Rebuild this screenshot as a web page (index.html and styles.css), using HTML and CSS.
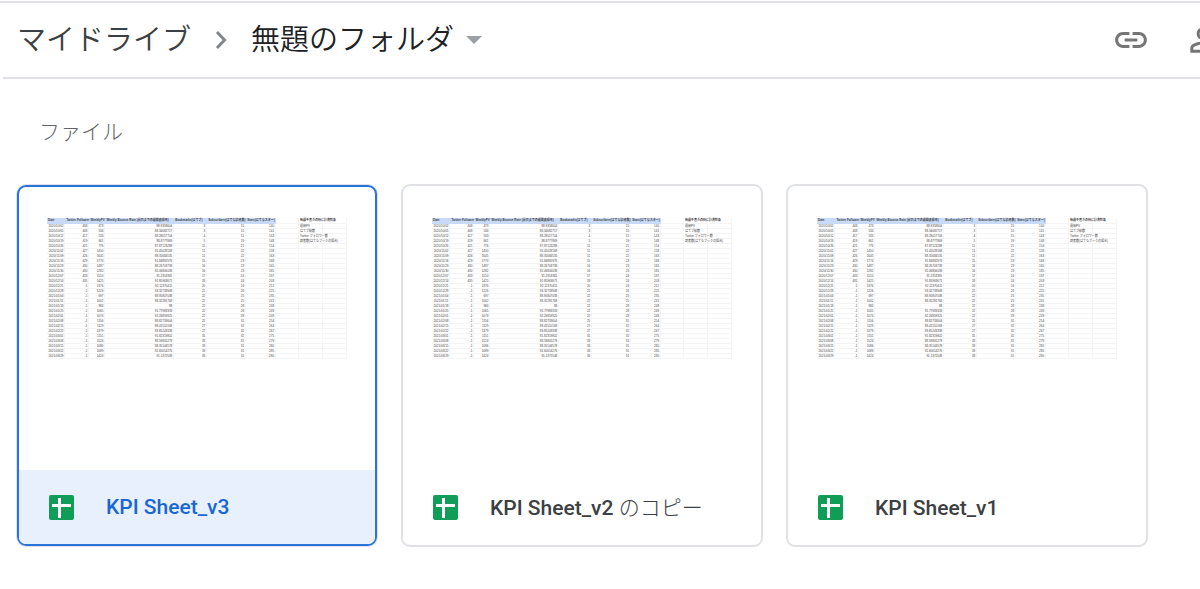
FILE: index.html
```html
<!DOCTYPE html>
<html lang="ja">

<head>
    <meta charset="UTF-8">
    <meta name="viewport" content="width=device-width, initial-scale=1.0">
    <title>無題のフォルダ</title>
    <link rel="stylesheet" href="styles.css">
</head>

<body>
    <header class="toolbar">
        <nav class="breadcrumb">
            <a href="#" class="crumb">マイドライブ</a>
            <svg class="chevron" viewBox="0 0 12 20" aria-hidden="true">
                <path d="M2 2l7.500 8L2 18" fill="none" stroke="#80868b" stroke-width="3" />
            </svg>
            <button type="button" class="crumb current">
                無題のフォルダ
                <svg class="caret" viewBox="0 0 16 8" aria-hidden="true">
                    <path d="M0 0h16L8 8z" fill="#9aa0a6" />
                </svg>
            </button>
        </nav>
        <div class="actions">
            <button type="button" class="icon-button" aria-label="リンクを取得">
                <svg viewBox="0 0 24 24">
                    <path d="M3.900 12c0-1.710 1.390-3.100 3.100-3.100h4V7H7c-2.760 0-5 2.240-5 5s2.240 5 5 5h4v-1.900H7c-1.710 0-3.100-1.390-3.100-3.100zM8 13h8v-2H8v2zm9-6h-4v1.900h4c1.710 0 3.100 1.390 3.100 3.100s-1.390 3.100-3.100 3.100h-4V17h4c2.760 0 5-2.240 5-5s-2.240-5-5-5z" />
                </svg>
            </button>
            <button type="button" class="icon-button" aria-label="共有">
                <svg viewBox="0 0 24 24">
                    <path d="M12 5.900a2.100 2.100 0 1 1 0 4.200 2.100 2.100 0 0 1 0-4.200m0 9c2.970 0 6.100 1.460 6.100 2.100v1.100H5.900V17c0-.64 3.130-2.100 6.100-2.100M12 4C9.790 4 8 5.790 8 8s1.790 4 4 4 4-1.790 4-4-1.790-4-4-4zm0 9c-2.670 0-8 1.340-8 4v3h16v-3c0-2.660-5.330-4-8-4z" />
                </svg>
            </button>
        </div>
    </header>

    <main>
        <h2 class="section-title">ファイル</h2>
        <div class="files">
            <a href="#" class="card selected">
                <div class="preview"></div>
                <div class="card-footer">
                    <svg class="sheet-icon" viewBox="0 0 25 25" aria-hidden="true">
                        <rect width="25" height="25" rx="2" fill="#0f9d58" />
                        <path d="M3 9h19v3H12v11H9V12H3zM9 3h3v6H9z" fill="#fff" />
                    </svg>
                    <span>KPI Sheet_v3</span>
                </div>
            </a>
            <a href="#" class="card">
                <div class="preview"></div>
                <div class="card-footer">
                    <svg class="sheet-icon" viewBox="0 0 25 25" aria-hidden="true">
                        <rect width="25" height="25" rx="2" fill="#0f9d58" />
                        <path d="M3 9h19v3H12v11H9V12H3zM9 3h3v6H9z" fill="#fff" />
                    </svg>
                    <span>KPI Sheet_v2 <span class="ja">のコピー</span></span>
                </div>
            </a>
            <a href="#" class="card">
                <div class="preview"></div>
                <div class="card-footer">
                    <svg class="sheet-icon" viewBox="0 0 25 25" aria-hidden="true">
                        <rect width="25" height="25" rx="2" fill="#0f9d58" />
                        <path d="M3 9h19v3H12v11H9V12H3zM9 3h3v6H9z" fill="#fff" />
                    </svg>
                    <span>KPI Sheet_v1</span>
                </div>
            </a>
        </div>
    </main>

    <script src="script.js"></script>
</body>

</html>
```
FILE: styles.css
```css
body {
    margin: 0;
    font-family: Roboto, "Noto Sans CJK JP", sans-serif;
    color: #3c4043;
    background-color: #ffffff;
    overflow-x: hidden;
}

button {
    padding: 0;
    border: none;
    background: none;
    font-family: inherit;
    cursor: pointer;
}

.toolbar {
    display: flex;
    align-items: center;
    justify-content: space-between;
    height: 74px;
    margin-top: 1px;
    padding-left: 17px;
    border-top: 2px solid #dfe1e5;
    overflow: hidden;
}

.breadcrumb {
    display: flex;
    align-items: center;
}

.crumb {
    font-size: 29px;
    font-weight: 350;
    line-height: 40px;
    color: #3c4043;
    text-decoration: none;
    white-space: nowrap;
}

.chevron {
    width: 12px;
    height: 20px;
    margin: 0 24px;
}

.current {
    display: flex;
    align-items: center;
    gap: 12px;
    color: #202124;
}

.caret {
    width: 16px;
    height: 8px;
}

.actions {
    display: flex;
    gap: 34px;
    margin-right: -22px;
}

.icon-button {
    width: 38px;
    height: 38px;
}

.icon-button svg {
    display: block;
    fill: #757575;
}

main {
    margin-left: 3px;
    border-top: 2px solid #dfe1e5;
}

.section-title {
    margin: 37px 0 36px 36px;
    font-size: 21px;
    font-weight: 300;
    line-height: 32px;
    color: #5f6368;
}

.files {
    display: grid;
    grid-template-columns: repeat(3, 1fr);
    gap: 23px;
    padding: 0 52px 40px 13px;
}

.card {
    display: flex;
    flex-direction: column;
    border: 2px solid #dfe1e5;
    border-radius: 9px;
    color: #3c4043;
    text-decoration: none;
    overflow: hidden;
}

.selected {
    margin: 1px;
    border-color: #2a73dc;
    box-shadow: 0 0 0 1px #dfe1e5;
}

.preview {
    height: 252px;
    padding: 32px 29px 0;
}

.selected .preview {
    padding: 31px 28px 0;
}

.card-footer {
    display: flex;
    align-items: center;
    gap: 32px;
    height: 75px;
    padding: 0 30px;
    font-size: 21px;
    font-weight: 500;
    line-height: 24px;
}

.selected .card-footer {
    height: 74px;
    background-color: #e8f0fe;
    color: #1967d2;
}

.sheet-icon {
    width: 25px;
    height: 25px;
}

.ja {
    font-weight: 200;
    line-height: 20px;
}

.sheet {
    width: 100%;
    table-layout: fixed;
    border-collapse: collapse;
    font-family: "Liberation Sans", "Noto Sans CJK JP", sans-serif;
    font-size: 3px;
    line-height: 4px;
    color: #444444;
}

.sheet th,
.sheet td {
    box-sizing: border-box;
    height: 5px;
    padding: 0 1px;
    border: 1px solid #f5f5f5;
    border-width: 0 1px 1px 0;
    text-align: right;
    white-space: nowrap;
}

.sheet th {
    text-align: left;
    background-color: #c9daf8;
    border-color: #c9daf8;
}

.sheet .blank {
    background-color: transparent;
    border-color: #f5f5f5;
}

.sheet .note {
    text-align: left;
}
```
FILE: script.js
```js
const columns = [
    ["Date", 18], ["Twitter Follower", 24], ["WeeklyPV", 16],
    ["Weekly Bounce Rate (前日までの週間直帰率)", 69],
    ["Bookmarks(はてブ)", 33], ["Subscribers(はてな読者数)", 39],
    ["Stars(はてなスター)", 30], ["", 23],
    ["毎週手書きの時に計測対象", 24], ["", 24]
];

const rows = [
    ["2020/10/02", 408, 473, "88.9358604", 3, 15, 140],
    ["2020/10/05", 408, 534, "88.34082717", 3, 15, 141],
    ["2020/10/12", 417, 533, "88.28017704", 4, 15, 143],
    ["2020/10/19", 419, 661, "88.8777869", 5, 19, 148],
    ["2020/10/26", 421, 776, "87.87123288", 11, 21, 154],
    ["2020/11/02", 427, 1450, "91.45028168", 11, 22, 158],
    ["2020/11/09", 426, 1645, "88.35684535", 11, 22, 163],
    ["2020/11/16", 429, 1774, "91.84892976", 15, 23, 168],
    ["2020/11/23", 430, 1487, "88.26703738", 16, 23, 165],
    ["2020/11/30", 430, 1282, "92.06806038", 16, 23, 185],
    ["2020/12/07", 433, 1510, "91.2353381", 17, 24, 197],
    ["2020/12/14", 435, 1425, "91.85963671", 18, 24, 203],
    ["2020/12/21", -1, 1376, "92.12370411", 20, 24, 212],
    ["2020/12/28", -1, 1226, "93.32733948", 21, 26, 225],
    ["2021/01/04", -1, 697, "88.95807038", 22, 25, 235],
    ["2021/01/11", -1, 1002, "88.32281768", 22, 25, 241],
    ["2021/01/18", -1, 984, "88", 22, 28, 248],
    ["2021/01/25", -1, 1065, "91.77983333", 22, 28, 249],
    ["2021/02/01", -1, 1074, "92.26859925", 22, 28, 249],
    ["2021/02/08", -1, 1156, "88.82733604", 25, 31, 254],
    ["2021/02/15", -1, 1129, "88.41510168", 27, 32, 264],
    ["2021/02/22", -1, 1379, "89.85243338", 27, 32, 267],
    ["2021/03/01", -1, 1151, "91.82319802", 31, 32, 275],
    ["2021/03/08", -1, 1524, "88.59805279", 33, 31, 279],
    ["2021/03/15", -1, 1086, "88.35144578", 33, 31, 280],
    ["2021/03/22", -1, 1089, "92.65614276", 33, 31, 285],
    ["2021/03/29", -1, 1424, "91.1372548", 33, 31, 280]
];

const notes = ["週間PV", "はてブ総数", "Twitter フォロワー数", "読者数(はてなブックの場合)"];

function buildSheet() {
    const table = document.createElement("table");
    table.className = "sheet";

    const total = columns.reduce((sum, column) => sum + column[1], 0);
    const head = table.createTHead().insertRow();
    columns.forEach(([title, width], i) => {
        const th = document.createElement("th");
        th.textContent = title;
        th.style.width = (width / total * 100) + "%";
        if (i > 6) th.className = "blank";
        head.appendChild(th);
    });

    const body = table.createTBody();
    rows.forEach((row, i) => {
        const tr = body.insertRow();
        row.forEach(value => tr.insertCell().textContent = value);
        tr.insertCell();
        const note = tr.insertCell();
        note.className = "note";
        note.textContent = notes[i] || "";
        tr.insertCell();
    });

    return table;
}

document.querySelectorAll(".preview").forEach(preview => preview.appendChild(buildSheet()));
```
